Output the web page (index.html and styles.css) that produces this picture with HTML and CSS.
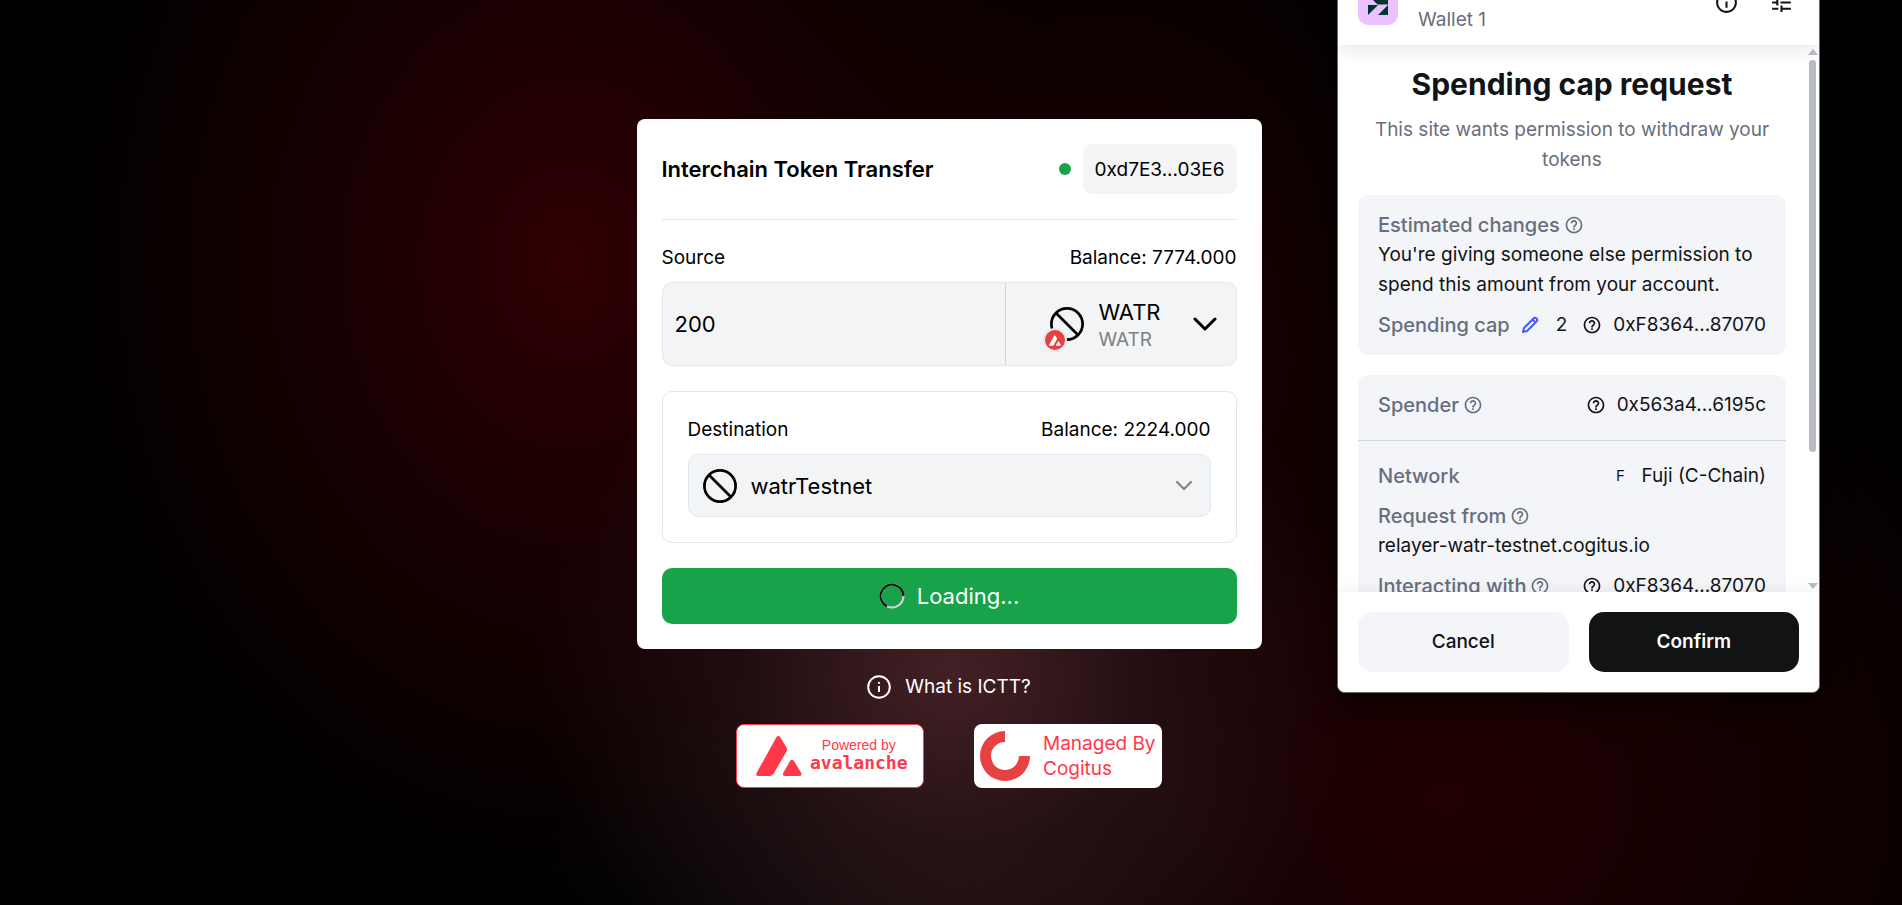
FILE: index.html
```html
<!DOCTYPE html>
<html lang="en">
<head>
<meta charset="utf-8">
<title>Interchain Token Transfer</title>
<link rel="stylesheet" href="styles.css">
</head>
<body>
<svg class="sprite" aria-hidden="true">
  <symbol id="help" viewBox="0 0 24 24"><path fill="currentColor" d="M11 18h2v-2h-2v2zm1-16C6.480 2 2 6.480 2 12s4.480 10 10 10 10-4.480 10-10S17.520 2 12 2zm0 18c-4.410 0-8-3.590-8-8s3.590-8 8-8 8 3.590 8 8-3.590 8-8 8zm0-14c-2.210 0-4 1.790-4 4h2c0-1.100.9-2 2-2s2 .9 2 2c0 2-3 1.750-3 5h2c0-2.250 3-2.500 3-5 0-2.210-1.790-4-4-4z"/></symbol>
  <symbol id="info" viewBox="0 0 24 24"><path fill="currentColor" d="M11 7h2v2h-2zm0 4h2v6h-2zm1-9C6.480 2 2 6.480 2 12s4.480 10 10 10 10-4.480 10-10S17.520 2 12 2zm0 18c-4.410 0-8-3.590-8-8s3.590-8 8-8 8 3.590 8 8-3.590 8-8 8z"/></symbol>
  <symbol id="ban" viewBox="0 0 34 34"><g fill="none" stroke="currentColor" stroke-width="2.700"><circle cx="17" cy="17" r="15.600"/><path d="M6 6l22 22"/></g></symbol>
  <symbol id="avax" viewBox="0 0 46 40"><path fill="currentColor" d="M20.500 1Q22.500-1 24.500 1.500L30.500 11.500Q31.500 13.500 30.500 15.500L18 37Q16.500 40 13.500 40H2.500Q-1 40 .8 36.500ZM34 25Q36 22 38 25L45 36.500Q46.800 40 43.500 40H29Q25.500 40 27.500 36.500Z"/></symbol>
</svg>

<main class="page">
  <section class="card">
    <header class="card-head">
      <h1 class="card-title">Interchain Token Transfer</h1>
      <div class="account"><span class="dot"></span><button class="chip" type="button">0xd7E3...03E6</button></div>
    </header>

    <div class="source">
      <div class="label-row"><label for="amount">Source</label><span>Balance: 7774.000</span></div>
      <div class="field">
        <input class="amount" id="amount" type="text" value="200">
        <button class="token" type="button" aria-haspopup="listbox">
          <span class="token-icon">
            <svg class="ban"><use href="#ban"/></svg>
            <span class="chain"><svg class="chain-mark"><use href="#avax"/></svg></span>
          </span>
          <span class="token-text"><span class="token-name">WATR</span><span class="token-sub">WATR</span></span>
          <svg class="chevron" viewBox="0 0 24 14"><path d="M2 2l10 10L22 2"/></svg>
        </button>
      </div>
    </div>

    <div class="destination">
      <div class="label-row"><label for="chain">Destination</label><span>Balance: 2224.000</span></div>
      <div class="picker">
        <svg class="ban"><use href="#ban"/></svg>
        <select class="select" id="chain"><option>watrTestnet</option></select>
        <svg class="chevron-small" viewBox="0 0 16 10"><path d="M1 1l7 7 7-7"/></svg>
      </div>
    </div>

    <button class="submit" type="button">
      <svg class="spinner" viewBox="0 0 26 26"><circle cx="13" cy="13" r="11.500" stroke="#d1d5db"/><path stroke="#0b0f0c" d="M8 23.400A11.500 11.500 0 1 1 24.500 13"/></svg>
      Loading...
    </button>
  </section>

  <a class="what" href="#ictt">
    <svg class="what-icon" viewBox="0 0 24 24"><circle cx="12" cy="12" r="10.800"/><path d="M12 11v6M12 7v1.800"/></svg>
    What is ICTT?
  </a>

  <footer class="badges">
    <a class="badge badge-avax" href="#avalanche">
      <svg class="avax-logo"><use href="#avax"/></svg>
      <span class="avax-text"><span class="powered">Powered by</span><span class="avalanche">avalanche</span></span>
    </a>
    <a class="badge badge-cog" href="#cogitus">
      <svg class="cog-logo" viewBox="0 0 50 50"><path fill="#e84142" d="M25 0A25 25 0 1 0 50 25H39A14 14 0 1 1 25 11Z"/></svg>
      <span class="cog-text">Managed By<br>Cogitus</span>
    </a>
  </footer>
</main>

<aside class="wallet">
  <header class="wallet-head">
    <svg class="avatar" viewBox="0 0 40 40"><rect width="40" height="40" rx="10" fill="#e9c2ff"/><path fill="#013330" d="M10 10H30V19.500H19.500ZM10 20H20L10 30ZM30 20V30H20Z"/></svg>
    <span class="wallet-name">Wallet 1</span>
    <button class="icon-btn" type="button" aria-label="Details"><svg class="icon-head"><use href="#info"/></svg></button>
    <button class="icon-btn" type="button" aria-label="Settings"><svg class="icon-head" viewBox="0 0 24 24"><path fill="currentColor" d="M3 17v2h6v-2H3zM3 5v2h10V5H3zm10 16v-2h8v-2h-8v-2h-2v6h2zM7 9v2H3v2h4v2h2V9H7zm14 4v-2H11v2h10zm-6-4h2V7h4V5h-4V3h-2v6z"/></svg></button>
  </header>

  <div class="wallet-body">
    <h2 class="wallet-title">Spending cap request</h2>
    <p class="wallet-sub">This site wants permission to withdraw your tokens</p>

    <section class="panel">
      <div class="row"><span class="key">Estimated changes <svg class="help"><use href="#help"/></svg></span></div>
      <p class="note">You're giving someone else permission to spend this amount from your account.</p>
      <div class="row row-gap">
        <span class="key">Spending cap</span>
        <span class="value">
          <button class="edit" type="button" aria-label="Edit"><svg class="pencil" viewBox="0 0 18 18"><path d="M2 16l1-4L12.500 2.500Q14 1 15.500 2.500Q17 4 15.500 5.500L6 15ZM11.500 3.500l3 3"/></svg></button>
          <span class="count">2</span><svg class="help"><use href="#help"/></svg><span>0xF8364...87070</span>
        </span>
      </div>
    </section>

    <section class="panel panel-top">
      <div class="row"><span class="key">Spender <svg class="help"><use href="#help"/></svg></span><span class="value"><svg class="help"><use href="#help"/></svg><span>0x563a4...6195c</span></span></div>
    </section>
    <section class="panel panel-bottom">
      <div class="row"><span class="key">Network</span><span class="value"><span class="letter">F</span><span>Fuji (C-Chain)</span></span></div>
      <div class="row row-gap"><span class="key">Request from <svg class="help"><use href="#help"/></svg></span></div>
      <p class="note">relayer-watr-testnet.cogitus.io</p>
      <div class="row row-gap"><span class="key">Interacting with <svg class="help"><use href="#help"/></svg></span><span class="value"><svg class="help"><use href="#help"/></svg><span>0xF8364...87070</span></span></div>
    </section>

    <div class="scrollbar"><span class="arrow-up"></span><span class="thumb"></span><span class="arrow-down"></span></div>
  </div>

  <footer class="wallet-foot">
    <button class="btn btn-cancel" type="button">Cancel</button>
    <button class="btn btn-confirm" type="button">Confirm</button>
  </footer>
</aside>
</body>
</html>
```
FILE: styles.css
```css
* { box-sizing: border-box; }
body {
  margin: 0;
  min-height: 100vh;
  position: relative;
  overflow: hidden;
  font: 400 19px/25px Inter, "Liberation Sans", sans-serif;
  color: #000;
  background:
    radial-gradient(ellipse 22% 40% at 50% 74%, rgba(72, 36, 42, .9), rgba(50, 25, 29, .5) 50%, transparent),
    radial-gradient(ellipse 22% 30% at 50% 100%, rgba(34, 22, 24, .6), transparent),
    radial-gradient(ellipse 27% 70% at 30% 29%, #300004, #190002 45%, transparent),
    radial-gradient(ellipse 34% 60% at 76% 88%, #220003, #110001 55%, transparent),
    radial-gradient(ellipse 22% 70% at 58% 50%, #260003, transparent),
    #000;
}
button, input, select { font: inherit; color: inherit; border: 0; padding: 0; margin: 0; background: none; }
h1, h2, p { margin: 0; }
a { color: inherit; text-decoration: none; }
svg { display: block; flex: none; }
.sprite { position: absolute; width: 0; height: 0; }

.page { display: flex; flex-direction: column; align-items: center; padding: 119px 4px 0 0; }
.card {
  width: 100%;
  max-width: 625px;
  padding: 25px;
  display: flex;
  flex-direction: column;
  gap: 25px;
  background: #fff;
  border-radius: 8px;
}
.card-head {
  display: flex;
  align-items: center;
  justify-content: space-between;
  padding-bottom: 25px;
  border-bottom: 1px solid #e5e7eb;
}
.card-title { font-size: 22px; line-height: 28px; font-weight: 600; }
.account { display: flex; align-items: center; gap: 12px; }
.dot { width: 12px; height: 12px; border-radius: 50%; background: #16a34a; }
.chip { height: 50px; padding: 0 12px; border-radius: 10px; background: #f3f4f6; }
.label-row { display: flex; justify-content: space-between; margin-bottom: 12px; }
.field {
  display: flex;
  height: 84px;
  background: #f3f4f6;
  border: 1px solid #e2e8f0;
  border-radius: 10px;
}
.amount { flex: 1; min-width: 0; padding: 0 12px; font-size: 22px; }
.token {
  width: 231px;
  display: flex;
  align-items: center;
  justify-content: flex-end;
  padding-right: 19px;
  border-left: 1px solid #d1d5db;
  text-align: left;
}
.token-icon { position: relative; margin-right: 14px; }
.ban { width: 34px; height: 34px; }
.chain {
  position: absolute;
  left: -7px;
  bottom: -11px;
  width: 24px;
  height: 24px;
  display: flex;
  align-items: center;
  justify-content: center;
  border: 2px solid #e5e7eb;
  border-radius: 50%;
  background: #e84142;
  color: #fff;
}
.chain-mark { width: 12px; height: 11px; }
.token-text { display: flex; flex-direction: column; margin-right: 32px; }
.token-name { font-size: 22px; line-height: 30px; }
.token-sub { color: #808080; }
.chevron { width: 24px; height: 14px; fill: none; stroke: #000; stroke-width: 3; stroke-linecap: round; stroke-linejoin: round; }
.destination { padding: 25px; border: 1px solid #e5e7eb; border-radius: 10px; }
.picker {
  display: flex;
  align-items: center;
  gap: 14px;
  height: 63px;
  padding: 0 18px 0 14px;
  background: #f3f4f6;
  border: 1px solid #e2e8f0;
  border-radius: 10px;
}
.select { flex: 1; appearance: none; font-size: 22px; line-height: 30px; }
.chevron-small { width: 16px; height: 10px; fill: none; stroke: #808080; stroke-width: 2; stroke-linecap: round; stroke-linejoin: round; }
.submit {
  display: flex;
  align-items: center;
  justify-content: center;
  gap: 12px;
  height: 56px;
  border-radius: 10px;
  background: #18a34a;
  color: #fff;
  font-size: 22px;
}
.spinner { width: 26px; height: 26px; fill: none; stroke-width: 2; }
.what { display: flex; align-items: center; gap: 14px; margin: 25px 0; color: #fff; }
.what-icon { width: 24px; height: 24px; fill: none; stroke: #fff; stroke-width: 2; }
.badges { display: flex; gap: 50px; }
.badge { width: 188px; height: 64px; display: flex; align-items: center; border-radius: 8px; background: #fff; color: #ff394a; }
.badge-avax { padding-left: 19px; gap: 8px; border: 1px solid #ff394a; }
.avax-logo { width: 46px; height: 40px; }
.avax-text { display: flex; flex-direction: column; align-items: center; padding-bottom: 4px; line-height: 18px; }
.powered { font-family: "Liberation Sans", sans-serif; font-size: 14px; }
.avalanche { font-family: "DejaVu Sans Mono", monospace; font-size: 18px; font-weight: 700; }
.badge-cog { padding-left: 6px; gap: 13px; }
.cog-logo { width: 50px; height: 50px; }

.wallet {
  position: absolute;
  top: -35px;
  right: 82px;
  width: 483px;
  overflow: hidden;
  border: 1px solid #6b6b6b;
  border-top: 0;
  border-radius: 8px;
  background: #fff;
  color: #121314;
  font-size: 19px;
  line-height: 30px;
  box-shadow: 0 10px 30px rgba(0, 0, 0, .6);
}
.wallet-head {
  position: relative;
  z-index: 1;
  display: flex;
  align-items: flex-start;
  gap: 20px;
  height: 80px;
  padding: 20px 25px 20px 20px;
  background: #fff;
  box-shadow: 0 2px 20px rgba(0, 0, 0, .12);
}
.avatar { width: 40px; height: 40px; }
.wallet-name { flex: 1; align-self: flex-end; line-height: 20px; margin-bottom: -5px; color: #686e7d; }
.icon-btn { padding: 5px 0 5px 10px; }
.icon-head { width: 25px; height: 25px; }
.wallet-body { position: relative; height: 547px; overflow: hidden; padding: 20px 33px 0 20px; }
.wallet-title { font-size: 30px; line-height: 38px; font-weight: 700; text-align: center; }
.wallet-sub { margin: 12px 0 20px; text-align: center; color: #686e7d; }
.panel { margin-bottom: 20px; padding: 15px 20px; border-radius: 10px; background: #f3f5f9; }
.panel-top { margin: 0; padding-bottom: 20px; border-bottom: 1px solid #d5d8e2; border-radius: 10px 10px 0 0; }
.panel-bottom { padding-top: 20px; border-radius: 0 0 10px 10px; }
.row { display: flex; justify-content: space-between; }
.row-gap { margin-top: 10px; }
.key { display: flex; align-items: center; gap: 4px; color: #686e7d; font-size: 20px; font-weight: 500; }
.value { display: flex; align-items: center; gap: 11px; }
.help { width: 20px; height: 20px; }
.letter { width: 20px; font-size: 15px; text-align: center; }
.edit { color: #4459ff; }
.pencil { width: 18px; height: 18px; fill: none; stroke: currentColor; stroke-width: 2; stroke-linejoin: round; }
.count { margin: 0 4px 0 6px; }
.scrollbar {
  position: absolute;
  top: 4px;
  right: 2px;
  bottom: 3px;
  width: 9px;
  display: flex;
  flex-direction: column;
  align-items: center;
  gap: 5px;
}
.arrow-up { border: 5px solid transparent; border-top: 0; border-bottom: 6px solid #b7bbc8; }
.thumb { width: 7px; height: 392px; border-radius: 4px; background: #b7bbc8; }
.arrow-down { margin-top: auto; border: 5px solid transparent; border-bottom: 0; border-top: 6px solid #b7bbc8; }
.wallet-foot {
  position: relative;
  display: flex;
  gap: 20px;
  padding: 20px;
  background: #fff;
  box-shadow: 0 0 15px rgba(0, 0, 0, .08);
}
.btn { flex: 1; height: 60px; border-radius: 15px; font-weight: 500; }
.btn-cancel { background: #f3f5f9; }
.btn-confirm { background: #121314; color: #fff; font-weight: 600; }
```
